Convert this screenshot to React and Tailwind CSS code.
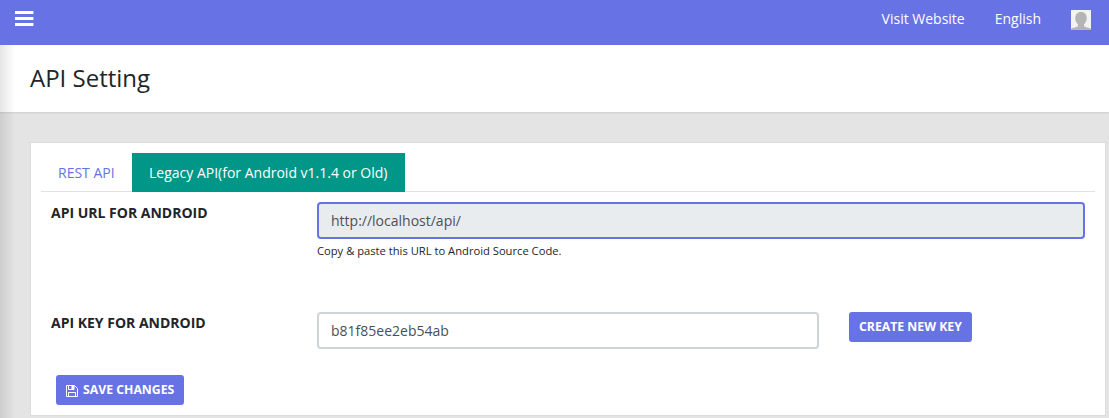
const labelClass = 'w-[266px] shrink-0 text-sm leading-[21px] font-bold text-[#212529]';
const buttonClass =
  'flex h-[30px] items-center rounded-[3px] bg-[#6772e5] px-[10px] text-[12.25px] font-bold whitespace-nowrap text-white';

function MenuIcon() {
  return (
    <svg width="19" height="15" viewBox="0 0 19 15" fill="#fff" aria-hidden="true">
      <path d="M0 0h18.4v3H0zM0 6h18.4v3H0zM0 12h18.4v3H0z" />
    </svg>
  );
}

function Avatar() {
  return (
    <svg width="20" height="20" viewBox="0 0 20 20" aria-hidden="true">
      <path fill="#f3f3f3" d="M0 0h20v20H0z" />
      <path
        fill="#b5b5b5"
        d="M10 2C6.300 2 4.300 4.600 4.300 8c0 2.700 1 4.900 2.700 6.300V16c-1 1.500-5.400 1.300-7 3v1h20v-1c-1.600-1.700-6-1.500-7-3v-1.700c1.700-1.400 2.700-3.600 2.700-6.300 0-3.400-2-6-5.700-6z"
      />
    </svg>
  );
}

function FloppyIcon() {
  return (
    <svg width="12" height="12" viewBox="0 0 12 12" fill="none" stroke="#fff" aria-hidden="true">
      <path d="M.5 .5h8l3 3v8H.5z" />
      <path d="M2.500 11.500v-4h7v4M2.500 .5v4h5.500v-4" />
      <path fill="#fff" stroke="none" d="M5.500 1h2.500v3H5.500z" />
    </svg>
  );
}

export default function App() {
  return (
    <div className="relative flex h-[418px] w-[1109px] flex-col overflow-hidden bg-[#e4e4e4] font-['Open_Sans',sans-serif] text-sm text-[#212529]">
      <header className="flex h-[45px] shrink-0 items-start justify-between bg-[#6772e5] pl-[15px] pr-[18px] text-white">
        <button className="mt-[11px]" aria-label="Menu">
          <MenuIcon />
        </button>
        <nav className="flex">
          <a className="mt-[8px] leading-[21px]">Visit Website</a>
          <a className="mt-[8px] ml-[30px] leading-[21px]">English</a>
          <a className="mt-[10px] ml-[30px]">
            <Avatar />
          </a>
        </nav>
      </header>
      <div className="relative h-[373px]">
        <div className="flex h-[67px] items-center bg-white pb-[2px] pl-[30px] shadow-[0_1px_2px_rgba(0,0,0,0.1)]">
          <h1 className="text-2xl leading-[29px]">API Setting</h1>
        </div>
        <main className="mt-[31px] ml-[31px] h-[272px] w-[1074px] bg-white px-[10px] pt-[10px] shadow-[0_0_0_1px_#dcdcdc]">
          <div className="flex h-[39px] border-b border-[#dee2e6]">
            <a className="w-[91px] pt-[9px] pl-[17px] leading-[21px] text-[#6772e5]">REST API</a>
            <a className="h-[39px] w-[273px] bg-[#009688] pt-[9px] pl-[17px] leading-[21px] whitespace-nowrap text-white">
              Legacy API(for Android v1.1.4 or Old)
            </a>
          </div>
          <div className="mt-[10px] flex h-[110px] pl-[10px]">
            <label className={labelClass}>API URL FOR ANDROID</label>
            <div className="w-[768px]">
              <div className="flex h-[37px] items-center rounded-[4px] border-2 border-[#6772e5] bg-[#e9ecef] px-3 text-[#495057]">
                http://localhost/api/
              </div>
              <p className="mt-[3px] text-[11.2px] leading-[17px]">
                Copy &amp; paste this URL to Android Source Code.
              </p>
            </div>
          </div>
          <div className="flex h-[63px] pl-[10px]">
            <label className={labelClass}>API KEY FOR ANDROID</label>
            <div className="flex h-[37px] w-[502px] items-center rounded-[4px] border-2 border-[#ced4da] bg-white px-3 text-[#495057]">
              b81f85ee2eb54ab
            </div>
            <button className={buttonClass + ' ml-[30px] w-[123px]'}>CREATE NEW KEY</button>
          </div>
          <button className={buttonClass + ' ml-[15px] w-[128px] gap-[5px]'}>
            <span className="mt-[2px]">
              <FloppyIcon />
            </span>
            SAVE CHANGES
          </button>
        </main>
        <div className="pointer-events-none absolute inset-y-0 left-0 w-[15px] bg-linear-to-r from-black/10 to-transparent" />
      </div>
    </div>
  );
}
